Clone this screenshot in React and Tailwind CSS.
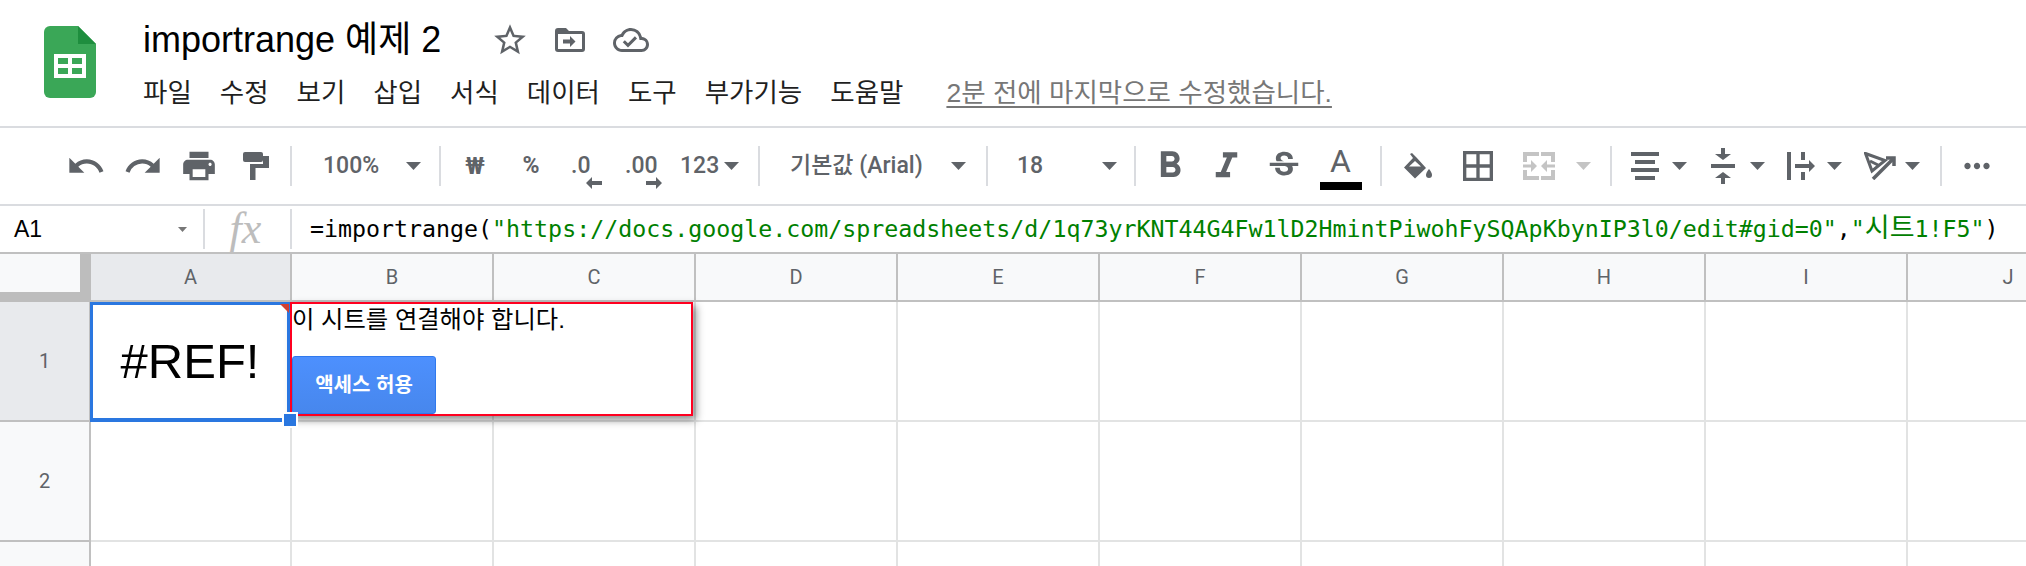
import {
  MdUndo, MdRedo, MdPrint, MdFormatBold, MdFormatItalic, MdStrikethroughS,
  MdStarBorder, MdOutlineCloudDone, MdBorderAll, MdMoreHoriz,
} from 'react-icons/md'

const sans = 'font-["Liberation_Sans","Noto_Sans_CJK_KR",sans-serif]'
const ui = 'font-["Roboto","Noto_Sans_CJK_KR",sans-serif]'

function Logo() {
    return (
        <svg width="52" height="72" viewBox="0 0 52 72">
            <path d="M6 0H34L52 18V66a6 6 0 0 1-6 6H6a6 6 0 0 1-6-6V6a6 6 0 0 1 6-6z" fill="#3aa757" />
            <path d="M34 0L52 18H34z" fill="#1e8e3e" />
            <path d="M10 28H42V52H10zM14 32V38H24V32zM28 32V38H38V32zM14 42V48H24V42zM28 42V48H38V42z" fill="#fff" fillRule="evenodd" />
        </svg>
    )
}

function Arrow({ color = '#5f6368', cls = '' }) {
    return (
        <svg width="15" height="8" viewBox="0 0 15 8" className={`shrink-0 ${cls}`}>
            <path d="M0 0H15L7.5 8z" fill={color} />
        </svg>
    )
}

function Sep({ cls = '' }) {
    return <div className={`w-[2px] h-[40px] bg-[#dadce0] shrink-0 ${cls}`} />
}

function Slot({ cls, children }) {
    return <div className={`flex items-center justify-center shrink-0 h-[40px] text-[#5f6368] ${cls}`}>{children}</div>
}

function Drop({ cls, label }) {
    return (
        <div className={`flex items-center justify-between shrink-0 h-[40px] ${cls}`}>
            <span className={`${ui} font-medium text-[23px] text-[#5f6368] whitespace-nowrap`}>{label}</span>
            <Arrow />
        </div>
    )
}

function Decimal({ label, dir }) {
    return (
        <div className="relative h-[40px] w-full">
            <span className={`${ui} absolute top-0 leading-[40px] text-[23px] font-medium text-[#5f6368] ${dir === 'left' ? 'left-[12px]' : 'left-[10px]'}`}>{label}</span>
            <svg width="16" height="12" viewBox="0 0 16 12" className={`absolute top-[31px] ${dir === 'left' ? 'left-[27px]' : 'left-[31px]'}`}>
                {dir === 'left'
                    ? <path d="M0 6L6 0V4H16V8H6V12z" fill="#5f6368" />
                    : <path d="M16 6L10 0V4H0V8H10V12z" fill="#5f6368" />}
            </svg>
        </div>
    )
}

function Toolbar() {
    return (
        <div className="flex items-center h-[76px] pl-[57px] border-b-2 border-[#dadce0] box-content">
            <Slot cls="w-[57px]"><MdUndo size={40} /></Slot>
            <Slot cls="w-[57px]"><MdRedo size={40} /></Slot>
            <Slot cls="w-[56px]"><MdPrint size={38} /></Slot>
            <Slot cls="w-[57px]">
                <svg width="26" height="28" viewBox="0 0 26 28" fill="#5f6368">
                    <path d="M2 0H18a2 2 0 0 1 2 2V8a2 2 0 0 1-2 2H2a2 2 0 0 1-2-2V2a2 2 0 0 1 2-2z" />
                    <path d="M20 4H26V16H12.500V28H7V12H20z" />
                </svg>
            </Slot>
            <Sep cls="ml-[6px]" />
            <Drop cls="w-[147px] pl-[31px] pr-[18px]" label="100%" />
            <Sep />
            <Slot cls="w-[56px] ml-[6px]"><span className={`${ui} font-bold text-[24px]`}>₩</span></Slot>
            <Slot cls="w-[56px]"><span className={`${ui} font-bold text-[23px]`}>%</span></Slot>
            <Slot cls="w-[56px]"><Decimal label=".0" dir="left" /></Slot>
            <Slot cls="w-[56px]"><Decimal label=".00" dir="right" /></Slot>
            <Drop cls="w-[87px] pl-[9px] pr-[19px]" label="123" />
            <Sep />
            <Drop cls="w-[226px] pl-[30px] pr-[20px]" label="기본값 (Arial)" />
            <Sep />
            <Drop cls="w-[146px] pl-[29px] pr-[17px]" label="18" />
            <Sep />
            <Slot cls="w-[56px] ml-[6px]"><MdFormatBold size={44} /></Slot>
            <Slot cls="w-[57px]"><MdFormatItalic size={43} /></Slot>
            <Slot cls="w-[57px]"><MdStrikethroughS size={38} /></Slot>
            <div className="w-[57px] h-[50px] pt-[3px] shrink-0 flex flex-col items-center">
                <span className={`${ui} text-[32px] leading-[34px] text-[#5f6368]`}>A</span>
                <div className="w-[42px] h-[8px] bg-black mt-[4px] shrink-0" />
            </div>
            <Sep cls="ml-[11px]" />
            <Slot cls="w-[60px] ml-[6px]">
                <svg width="28" height="26" viewBox="0 0 28 26" fill="#5f6368">
                    <path d="M6 1L8 0 12.500 4.500 22 15 11 25.500 0 14.500 9 5z" />
                    <path d="M11 8L17 13.500H5z" fill="#fff" />
                    <path d="M25 16s3 3.500 3 6a3 3 0 0 1-6 0c0-2.500 3-6 3-6z" />
                </svg>
            </Slot>
            <Slot cls="w-[60px]"><MdBorderAll size={40} /></Slot>
            <Slot cls="w-[62px]">
                <svg width="32" height="28" viewBox="0 0 32 28" fill="#c4c4c4">
                    <path d="M0 0H16V4H4V10H0zM18 0H32V10H28V4H18zM0 18H4V24H16V28H0zM28 18H32V28H18V24H28z" />
                    <path d="M0 12.500H8V8L14 14 8 20V15.500H0zM32 12.500H24V8L18 14 24 20V15.500H32z" />
                </svg>
            </Slot>
            <Slot cls="w-[26px]"><Arrow color="#c4c4c4" /></Slot>
            <Sep cls="ml-[14px]" />
            <Slot cls="w-[28px] ml-[19px]">
                <svg width="28" height="28" viewBox="0 0 28 28" fill="#5f6368">
                    <path d="M0 0H28V4H0zM4 8H24V12H4zM0 16H28V20H0zM4 24H24V28H4z" />
                </svg>
            </Slot>
            <Arrow cls="ml-[13px]" />
            <Slot cls="w-[24px] ml-[24px]">
                <svg width="24" height="36" viewBox="0 0 24 36" fill="#5f6368">
                    <path d="M10 0H14V6H20L12 12 4 6H10zM0 16H24V20H0zM12 24L20 30H14V36H10V30H4z" />
                </svg>
            </Slot>
            <Arrow cls="ml-[15px]" />
            <Slot cls="w-[28px] ml-[22px]">
                <svg width="28" height="28" viewBox="0 0 28 28" fill="#5f6368">
                    <path d="M0 0H4V28H0zM14 0H18V8H14zM14 20H18V28H14zM8 12H22V8L28 14 22 20V16H8z" />
                </svg>
            </Slot>
            <Arrow cls="ml-[12px]" />
            <Slot cls="w-[32px] ml-[22px]">
                <svg width="32" height="28" viewBox="0 0 32 28" fill="none" stroke="#5f6368" strokeWidth="3">
                    <path d="M1.500 1.500L21 8.500 8 19z" />
                    <path d="M6 9L14 13" />
                    <path d="M9 27L30 6" strokeWidth="3.500" />
                    <path d="M22 6H30V14" strokeWidth="3.500" />
                </svg>
            </Slot>
            <Arrow cls="ml-[9px]" />
            <Sep cls="ml-[20px]" />
            <Slot cls="w-[40px] ml-[15px]"><MdMoreHoriz size={38} /></Slot>
        </div>
    )
}

function FormulaBar() {
    return (
        <div className="flex items-center h-[46px] border-b-2 border-[#c0c0c0] box-content">
            <div className="w-[203px] flex items-center justify-between pl-[14px] pr-[16px] shrink-0">
                <span className={`${sans} text-[23px] text-black`}>A1</span>
                <svg width="9" height="5" viewBox="0 0 9 5"><path d="M0 0H9L4.500 5z" fill="#777" /></svg>
            </div>
            <Sep cls="h-[36px]" />
            <div className="w-[85px] shrink-0 text-center pr-[4px] font-['Liberation_Serif',serif] italic text-[44px] leading-[38px] text-[#bdbdbd]">fx</div>
            <Sep cls="h-[36px]" />
            <div className="pl-[18px] whitespace-nowrap font-['DejaVu_Sans_Mono','Noto_Sans_CJK_KR',monospace] text-[23.28px] text-black">
                =importrange(<span className="text-[#008000]">"https://docs.google.com/spreadsheets/d/1q73yrKNT44G4Fw1lD2HmintPiwohFySQApKbynIP3l0/edit#gid=0"</span>,<span className="text-[#008000]">"<span className="text-[27px] leading-[0]">시트</span>1!F5"</span>)
            </div>
        </div>
    )
}

const cols = ['A', 'B', 'C', 'D', 'E', 'F', 'G', 'H', 'I', 'J']

function Sheet() {
    return (
        <div className={`grid grid-cols-[91px_201px_repeat(9,202px)] grid-rows-[48px_120px_120px_60px] overflow-hidden ${sans}`}>
            <div className="bg-[#f8f9fa] border-r-[11px] border-b-[10px] border-[#bdbdbd]" />
            {cols.map((c, i) => (
                <div
                    key={c}
                    className={`flex items-center justify-center border-r-2 border-b-2 border-[#c0c0c0] ${ui} text-[20px] text-[#5f6368] ${i === 0 ? 'bg-[#e8eaed]' : 'bg-[#f8f9fa]'}`}
                >
                    {c}
                </div>
            ))}
            {[1, 2, 3].map((r) => (
                <Row key={r} r={r} />
            ))}
        </div>
    )
}

function Row({ r }) {
    return (
        <>
            <div className={`flex items-center justify-center border-r-2 border-b-2 border-[#c0c0c0] ${ui} text-[20px] text-[#5f6368] ${r === 1 ? 'bg-[#e8eaed]' : 'bg-[#f8f9fa]'}`}>
                {r < 3 ? r : ''}
            </div>
            {cols.map((c, i) => (
                <div key={c} className="relative border-r-2 border-b-2 border-[#e2e3e3] bg-white">
                    {r === 1 && i === 0 && <SelectedCell />}
                    {r === 1 && i === 1 && <LinkPopup />}
                </div>
            ))}
        </>
    )
}

function SelectedCell() {
    return (
        <div className="absolute left-[-1px] top-0 w-[200px] h-[120px] border-[3px] border-b-4 border-[#2a77e0] z-30 flex items-center justify-center">
            <span className={`${sans} text-[49px] text-black`}>#REF!</span>
            <div className="absolute right-[-2px] top-[-1px] w-0 h-0 border-t-[9px] border-l-[9px] border-t-[#d23f31] border-l-transparent" />
            <div className="absolute right-[-11px] bottom-[-10px] w-[16px] h-[16px] border-2 border-white bg-[#2a77e0]" />
        </div>
    )
}

function LinkPopup() {
    return (
        <div className="absolute left-[-2px] top-0 w-[403px] h-[114px] border-2 border-[#ff0020] bg-white z-20 shadow-[3px_4px_8px_rgba(0,0,0,0.45)]">
            <div className={`${sans} text-[24.3px] leading-[28px] pt-[2px] text-black whitespace-nowrap`}>이 시트를 연결해야 합니다.</div>
            <button className={`${sans} mt-[22px] w-[144px] h-[58px] rounded-[3px] border border-[#3079ed] bg-gradient-to-b from-[#4d90fe] to-[#4787ed] text-white font-bold text-[20px]`}>
                액세스 허용
            </button>
        </div>
    )
}

export default function App() {
    return (
        <div className="w-[2026px] h-[566px] overflow-hidden bg-white">
            <div className="flex h-[100px] pl-[44px] pt-[26px] border-b-2 border-[#dadce0] box-content">
                <Logo />
                <div className="ml-[47px]">
                    <div className="flex items-center h-[32px] mt-[-2px]">
                        <span className={`${sans} text-[36px] leading-[32px] text-black w-[348px] whitespace-nowrap`}>importrange 예제 2</span>
                        <MdStarBorder size={38} className="text-[#5f6368]" />
                        <svg width="30" height="24" viewBox="0 0 30 24" className="ml-[26px]">
                            <path d="M3 0H11L14 3H27a3 3 0 0 1 3 3V21a3 3 0 0 1-3 3H3a3 3 0 0 1-3-3V3a3 3 0 0 1 3-3zM3 6V21H27V6z" fill="#5f6368" fillRule="evenodd" />
                            <path d="M8 11.500H15V8L20.500 13.500 15 19V15.500H8z" fill="#5f6368" />
                        </svg>
                        <MdOutlineCloudDone size={36} className="text-[#5f6368] ml-[28px]" />
                    </div>
                    <div className={`flex items-center mt-[19px] gap-[28px] ${sans} text-[26.500px] leading-[36px] text-[#1f1f1f] whitespace-nowrap`}>
                        {['파일', '수정', '보기', '삽입', '서식', '데이터', '도구', '부가기능', '도움말'].map((m) => (
                            <span key={m}>{m}</span>
                        ))}
                        <span className="ml-[15px] text-[#777] underline underline-offset-4">2분 전에 마지막으로 수정했습니다.</span>
                    </div>
                </div>
            </div>
            <Toolbar />
            <FormulaBar />
            <Sheet />
        </div>
    )
}
